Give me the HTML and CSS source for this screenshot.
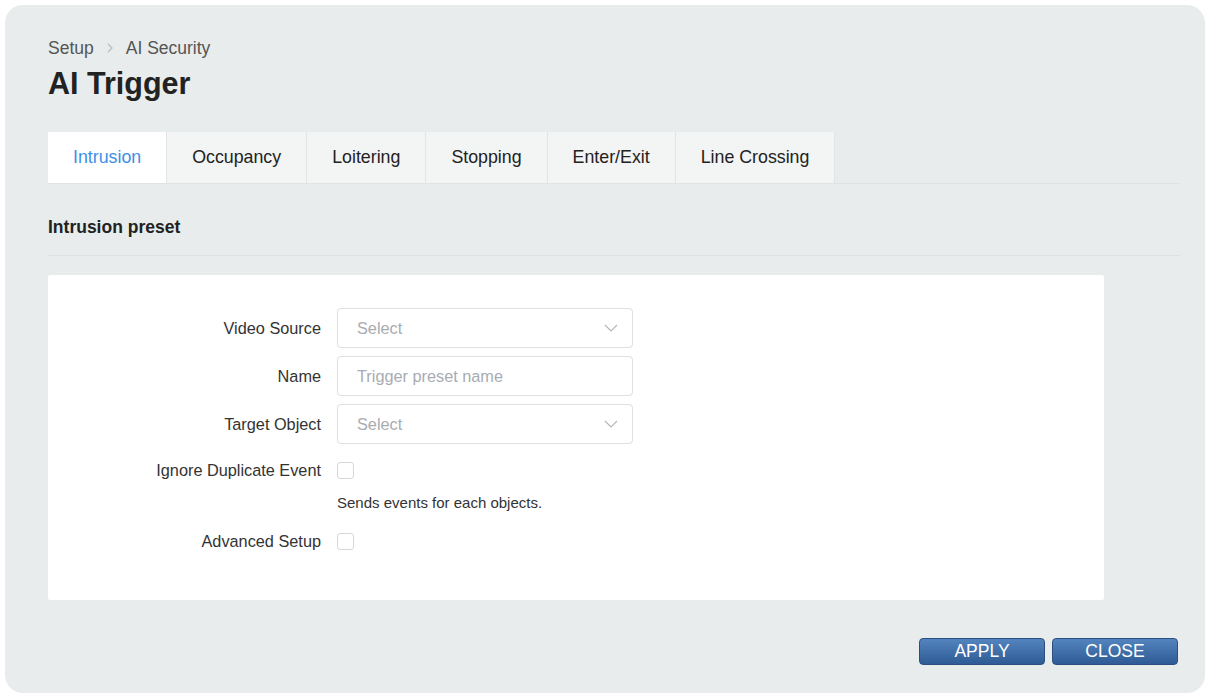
FILE: index.html
```html
<!DOCTYPE html>
<html lang="en">
  <head>
    <meta charset="UTF-8" />
    <title>AI Trigger</title>
    <link rel="stylesheet" href="styles.css">
  </head>
  <body>
    <div class="panel">
      <div class="breadcrumb">
        <span>Setup</span>
        <svg class="crumb-sep" width="8" height="12" viewBox="0 0 8 12"><path d="M2 2l4 4-4 4" fill="none" stroke="#b9bcbe" stroke-width="1.2"/></svg>
        <span>AI Security</span>
      </div>
      <h1 class="title">AI Trigger</h1>

      <div class="tabs">
        <div class="tab active">Intrusion</div>
        <div class="tab">Occupancy</div>
        <div class="tab">Loitering</div>
        <div class="tab">Stopping</div>
        <div class="tab">Enter/Exit</div>
        <div class="tab">Line Crossing</div>
      </div>

      <h3 class="section-title">Intrusion preset</h3>

      <div class="card">
        <div class="row">
          <label>Video Source</label>
          <div class="select">
            <span>Select</span>
            <svg width="14" height="8" viewBox="0 0 14 8"><path d="M1 1l6 6 6-6" fill="none" stroke="#b4b8bc" stroke-width="1.2"/></svg>
          </div>
        </div>
        <div class="row">
          <label>Name</label>
          <input class="text-input" type="text" placeholder="Trigger preset name" />
        </div>
        <div class="row">
          <label>Target Object</label>
          <div class="select">
            <span>Select</span>
            <svg width="14" height="8" viewBox="0 0 14 8"><path d="M1 1l6 6 6-6" fill="none" stroke="#b4b8bc" stroke-width="1.2"/></svg>
          </div>
        </div>
        <div class="row check-row">
          <label>Ignore Duplicate Event</label>
          <span class="checkbox"></span>
        </div>
        <div class="row hint-row">
          <label></label>
          <span class="hint">Sends events for each objects.</span>
        </div>
        <div class="row check-row">
          <label>Advanced Setup</label>
          <span class="checkbox"></span>
        </div>
      </div>

      <div class="actions">
        <button>APPLY</button>
        <button>CLOSE</button>
      </div>
    </div>
  </body>
</html>
```

FILE: styles.css
```css
body {
  font-family: "Liberation Sans", Arial, sans-serif;
  background: #ffffff;
  margin: 0;
  padding: 5px;
  color: #333;
}

.panel {
  background: #e8ecec;
  border-radius: 18px;
  width: 1200px;
  height: 688px;
  box-sizing: border-box;
  padding: 33px 25px 0 43px;
}

.breadcrumb {
  display: flex;
  align-items: center;
  gap: 12px;
  font-size: 17.5px;
  color: #555;
  height: 20px;
}

.title {
  margin: 6px 0 0;
  font-size: 30.5px;
  font-weight: bold;
  color: #222;
  height: 38px;
  line-height: 38px;
}

.tabs {
  display: flex;
  margin-top: 30px;
  border-bottom: 1px solid #dfe3e3;
}

.tab {
  background: #f3f4f4;
  height: 51px;
  line-height: 51px;
  padding: 0 25px;
  font-size: 17.8px;
  color: #222;
  border-right: 1px solid #e3e5e5;
}

.tab.active {
  background: #fff;
  color: #3d8fe8;
}

.section-title {
  margin: 0;
  padding: 33px 0 18px;
  font-size: 17.5px;
  font-weight: bold;
  color: #222;
  height: 20px;
  line-height: 20px;
  border-bottom: 1px solid #dde1e1;
}

.card {
  background: #fff;
  margin-top: 19px;
  width: 1056px;
  box-sizing: border-box;
  padding: 33px 0 40px;
  border-radius: 2px;
}

.row {
  display: flex;
  align-items: center;
  margin-bottom: 8px;
}

.row label {
  width: 273px;
  text-align: right;
  padding-right: 16px;
  font-size: 16.3px;
  color: #333;
  flex-shrink: 0;
}

.select,
.text-input {
  width: 296px;
  height: 40px;
  box-sizing: border-box;
  border: 1px solid #dcdfe3;
  border-radius: 4px;
  font-size: 16.3px;
  font-family: inherit;
  padding: 0 19px;
  color: #a8acb2;
}

.select {
  display: flex;
  align-items: center;
  justify-content: space-between;
  padding-right: 14px;
}

.text-input::placeholder {
  color: #a8acb2;
}

.check-row {
  height: 37px;
  margin-bottom: 0;
}

.checkbox {
  width: 17px;
  height: 17px;
  box-sizing: border-box;
  border: 1px solid #d4d7db;
  border-radius: 3px;
}

.hint-row {
  height: 26px;
  margin-bottom: 8px;
}

.hint {
  font-size: 15px;
  color: #333;
}

.actions {
  display: flex;
  justify-content: flex-end;
  gap: 7px;
  margin-top: 38px;
  padding-right: 2px;
}

button {
  width: 126px;
  height: 27px;
  font-family: inherit;
  font-size: 17.5px;
  color: #fff;
  background: linear-gradient(#5484bd, #2e5b95);
  border: 1px solid #2a4f80;
  border-radius: 4px;
  cursor: pointer;
}
```
